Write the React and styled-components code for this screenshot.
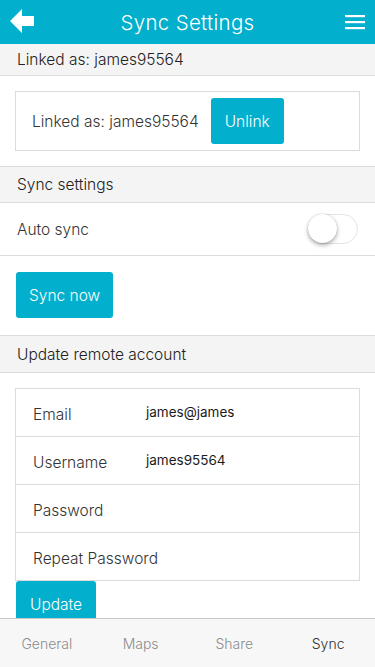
import React from 'react';
import styled, { createGlobalStyle } from 'styled-components';

const TEAL = '#02afcc';

const GlobalStyle = createGlobalStyle`
  html, body {
    margin: 0;
    padding: 0;
    background: #fff;
  }
  body {
    font-family: Inter, "Liberation Sans", sans-serif;
    font-weight: 300;
    color: #333;
  }
  * { box-sizing: border-box; }
`;

const Page = styled.div`
  height: 667px;
  display: flex;
  flex-direction: column;
  overflow: hidden;
`;

const Header = styled.header`
  height: 44px;
  flex: none;
  background: ${TEAL};
  display: grid;
  grid-template-columns: 60px 1fr 60px;
  align-items: center;
  color: #fff;
`;

const Title = styled.h1`
  margin: 0;
  text-align: center;
  font-size: 20.5px;
  font-weight: 300;
  letter-spacing: 0.3px;
`;

const IconButton = styled.button`
  height: 44px;
  border: 0;
  background: none;
  padding: 0;
  display: flex;
  align-items: center;
  justify-content: ${p => (p.$right ? 'flex-end' : 'flex-start')};
  padding-left: ${p => (p.$right ? 0 : 10)}px;
  padding-right: ${p => (p.$right ? 10 : 0)}px;
  cursor: pointer;
`;

const Content = styled.main`
  flex: 1;
  overflow: hidden;
`;

const SectionTitle = styled.div`
  height: ${p => p.$height || 37}px;
  background: #f4f4f4;
  border-top: ${p => (p.$topBorder ? '1px solid #dcdcdc' : '0')};
  border-bottom: 1px solid #dcdcdc;
  padding: 0 17px;
  display: flex;
  align-items: center;
  font-size: 15.5px;
  color: #222;
`;

const Card = styled.div`
  margin: 15px 15px 15px;
  border: 1px solid #dcdcdc;
`;

const LinkedCard = styled(Card)`
  display: flex;
  align-items: center;
  padding: 6px 16px;
  gap: 12px;
  font-size: 15.5px;
  color: #333;
`;

const Button = styled.button`
  height: 46px;
  border: 0;
  border-radius: 3px;
  background: ${TEAL};
  color: #fff;
  font-family: inherit;
  font-weight: 300;
  font-size: 15.5px;
  padding: 0 ${p => p.$pad || 14}px;
  cursor: pointer;
`;

const Row = styled.div`
  height: ${p => p.$height || 53}px;
  display: flex;
  align-items: center;
  justify-content: space-between;
  padding: 0 17px;
  border-bottom: 1px solid #dcdcdc;
  font-size: 15.5px;
  color: #333;
`;

const ButtonBlock = styled.div`
  padding: 16px 16px 17px;
  border-bottom: 1px solid #dcdcdc;
`;

const Toggle = styled.div`
  position: relative;
  width: 50px;
  height: 30px;
  border-radius: 15px;
  border: 1px solid #e4e4e4;
  background: #fff;
`;

const Knob = styled.span`
  position: absolute;
  left: -1px;
  top: -1px;
  width: 29px;
  height: 29px;
  border-radius: 50%;
  background: #fff;
  box-shadow: 0 2px 4px rgba(0, 0, 0, 0.35), 0 0 1px rgba(0, 0, 0, 0.2);
`;

const FormCard = styled(Card)`
  margin-bottom: 0;
`;

const FieldRow = styled.div`
  height: ${p => (p.$last ? 47 : 48)}px;
  display: flex;
  align-items: center;
  padding: 0 17px;
  border-bottom: ${p => (p.$last ? '0' : '1px solid #dcdcdc')};
`;

const FieldLabel = styled.span`
  flex: 0 0 113px;
  white-space: nowrap;
  font-size: 15.5px;
  color: #333;
  padding-top: 3px;
`;

const FieldValue = styled.span`
  font-size: 13.5px;
  font-weight: 400;
  color: #1a1a1a;
  padding-bottom: 2px;
`;

const UpdateWrap = styled.div`
  padding: 0 16px;
`;

const TabBar = styled.nav`
  height: 49px;
  flex: none;
  border-top: 1px solid #c9c9c9;
  background: #f7f7f7;
  display: grid;
  grid-template-columns: repeat(4, 1fr);
  align-items: center;
`;

const Tab = styled.span`
  text-align: center;
  font-size: 14px;
  color: ${p => (p.$active ? '#333' : '#8c8c8c')};
`;

const BackArrow = () => (
  <svg width="26" height="26" viewBox="0 0 26 26">
    <polygon points="0,12 12,0 12,7 24,7 24,17 12,17 12,24" fill="#fff" />
  </svg>
);

const Hamburger = () => (
  <svg width="20" height="16" viewBox="0 0 20 16">
    <rect x="0" y="1" width="20" height="2.2" fill="#fff" />
    <rect x="0" y="7" width="20" height="2.2" fill="#fff" />
    <rect x="0" y="13" width="20" height="2.2" fill="#fff" />
  </svg>
);

const fields = [
  { label: 'Email', value: 'james@james' },
  { label: 'Username', value: 'james95564' },
  { label: 'Password', value: '' },
  { label: 'Repeat Password', value: '' },
];

const tabs = ['General', 'Maps', 'Share', 'Sync'];

export default function App() {
  return (
    <Page>
      <GlobalStyle />
      <Header>
        <IconButton aria-label="Back">
          <BackArrow />
        </IconButton>
        <Title>Sync Settings</Title>
        <IconButton $right aria-label="Menu">
          <Hamburger />
        </IconButton>
      </Header>

      <Content>
        <SectionTitle $height={32}>Linked as: james95564</SectionTitle>
        <LinkedCard>
          <span>Linked as: james95564</span>
          <Button>Unlink</Button>
        </LinkedCard>

        <SectionTitle $topBorder>Sync settings</SectionTitle>
        <Row>
          <span>Auto sync</span>
          <Toggle>
            <Knob />
          </Toggle>
        </Row>
        <ButtonBlock>
          <Button $pad={13}>Sync now</Button>
        </ButtonBlock>

        <SectionTitle>Update remote account</SectionTitle>
        <FormCard>
          {fields.map((f, i) => (
            <FieldRow key={f.label} $last={i === fields.length - 1}>
              <FieldLabel>{f.label}</FieldLabel>
              <FieldValue>{f.value}</FieldValue>
            </FieldRow>
          ))}
        </FormCard>
        <UpdateWrap>
          <Button>Update</Button>
        </UpdateWrap>
      </Content>

      <TabBar>
        {tabs.map(t => (
          <Tab key={t} $active={t === 'Sync'}>
            {t}
          </Tab>
        ))}
      </TabBar>
    </Page>
  );
}
